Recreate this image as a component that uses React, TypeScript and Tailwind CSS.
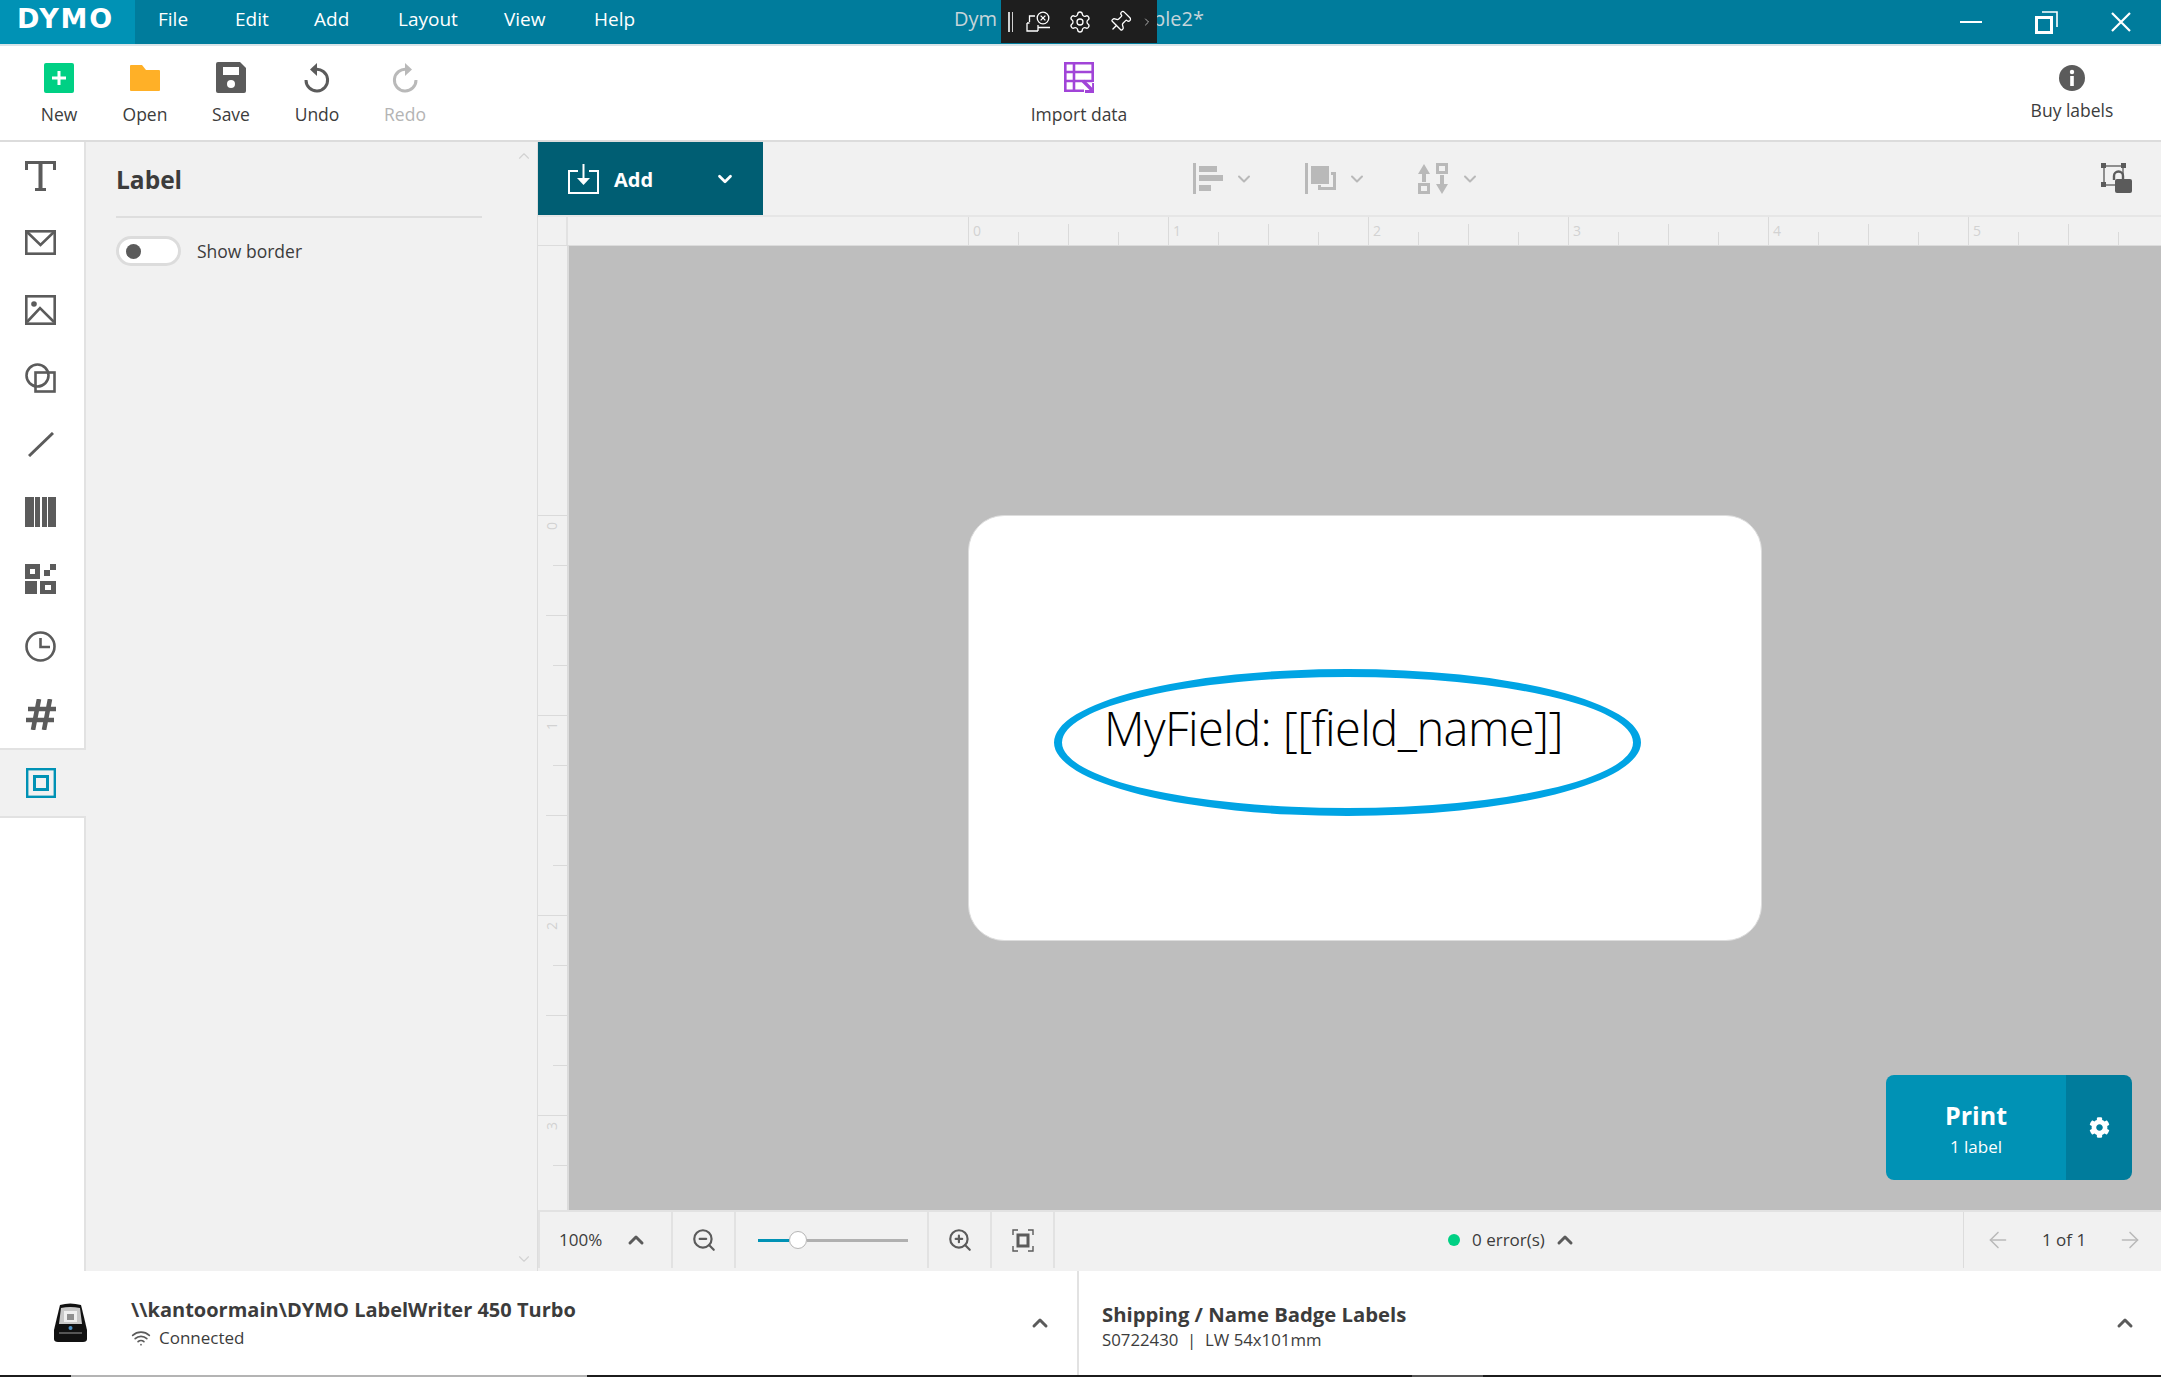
import { ChevronDown, ChevronUp, ZoomIn, ZoomOut, ArrowLeft, ArrowRight, Wifi, Settings, Pin, ChevronRight } from 'lucide-react';
import { FaCog } from 'react-icons/fa';

const FONT = "font-['Open_Sans','Noto_Sans',sans-serif]";

export default function App() {
  return (
    <div className={`flex flex-col w-[2161px] h-[1377px] overflow-hidden bg-white text-[#3c3c3c] ${FONT}`}>
      <TitleBar />
      <Toolbar />
      <div className="flex flex-1 min-h-0">
        <ToolRail />
        <LabelPanel />
        <Workspace />
      </div>
      <BottomBar />
      {/* Taskbar sliver at the very bottom */}
      <div className="flex h-[2px] shrink-0 bg-[#1c1c1c]">
        <div className="w-[71px]" />
        <div className="w-[516px] bg-[#b4b4b4]" />
        <div className="w-[825px]" />
        <div className="w-[71px] bg-[#555555]" />
      </div>
    </div>
  );
}

function TitleBar() {
  const menus = [
    { name: 'File', w: 'w-[77px]' },
    { name: 'Edit', w: 'w-[79px]' },
    { name: 'Add', w: 'w-[84px]' },
    { name: 'Layout', w: 'w-[106px]' },
    { name: 'View', w: 'w-[90px]' },
    { name: 'Help', w: 'w-[60px]' },
  ];
  return (
    <div className="relative flex h-[46px] shrink-0 items-stretch border-b-2 border-[#d9e4e8] bg-[#007c9c] text-white">
      <div className="flex w-[135px] items-center pl-[17px] pb-[7px] bg-[#0092b5]">
        <span className="font-['DejaVu_Sans',sans-serif] text-[27px] font-bold leading-none tracking-[1.8px]">DYMO</span>
      </div>
      <div className="flex items-center pl-[23px] pb-[6px] text-[19px]">
        {menus.map(m => (
          <span key={m.name} className={m.w}>{m.name}</span>
        ))}
      </div>
      <div className="ml-[300px] flex w-[250px] items-center justify-between pb-[6px] text-[20px] text-[#c6d5da]">
        <span>Dym</span>
        <span>ple2*</span>
      </div>

      {/* Remote desktop connection bar, sits over the title */}
      <div className="absolute left-[1001px] top-0 flex h-[43px] w-[156px] items-center bg-[#1e1e1e] text-white">
        <div className="ml-[7px] flex gap-[2px]">
          <div className="h-[20px] w-[1.5px] bg-[#d0d0d0]" />
          <div className="h-[20px] w-[1.5px] bg-[#d0d0d0]" />
        </div>
        <svg className="ml-[13px]" width="25" height="22" viewBox="0 0 25 22" fill="none" stroke="white" strokeWidth="1.3">
          <path d="M9 5H3.5V11M1 12H3.5M1 12V20H12M12 20V14" />
          <circle cx="17" cy="7" r="5.8" />
          <path d="M14.6 4.6l4.8 4.8M19.4 4.6l-4.8 4.8M12 16.5H24" />
        </svg>
        <Settings className="ml-[17px]" size={24} strokeWidth={1.3} />
        <Pin className="ml-[16px] rotate-45" size={24} strokeWidth={1.3} />
        <ChevronRight className="ml-[9px]" size={12} strokeWidth={1.3} />
      </div>

      {/* Window controls */}
      <div className="ml-auto flex items-center pr-[30px]">
        <div className="h-[2.5px] w-[22px] bg-white" />
        <svg className="ml-[53px]" width="23" height="23" viewBox="0 0 23 23" fill="none" stroke="white">
          <rect x="1.5" y="6.5" width="15" height="15" strokeWidth="3" />
          <path d="M7 1H22V16" strokeWidth="1.6" />
        </svg>
        <svg className="ml-[53px]" width="20" height="20" viewBox="0 0 20 20" stroke="white" strokeWidth="2.2">
          <path d="M1 1L19 19M19 1L1 19" />
        </svg>
      </div>
    </div>
  );
}

function ToolButton({ label, className, muted, children }: { label: string; className: string; muted?: boolean; children: React.ReactNode }) {
  return (
    <div className={`flex flex-col items-center ${className}`}>
      <div className="flex h-[31px] items-center justify-center">{children}</div>
      <span className={`mt-[10px] text-[17.5px] leading-[22px] whitespace-nowrap ${muted ? 'text-[#b4b4b4]' : ''}`}>{label}</span>
    </div>
  );
}

function Toolbar() {
  return (
    <div className="flex h-[96px] shrink-0 items-start border-b-2 border-[#dcdcdc] pt-[16px]">
      <ToolButton label="New" className="w-[86px] ml-[16px]">
        <svg width="30" height="30" viewBox="0 0 30 30">
          <rect width="30" height="30" rx="2" fill="#00d084" />
          <path d="M15 8V22M8 15H22" stroke="white" strokeWidth="3" />
        </svg>
      </ToolButton>
      <ToolButton label="Open" className="w-[86px]">
        <svg width="30" height="26" viewBox="0 0 30 26">
          <path d="M1 0H12L16 5H29A1 1 0 0 1 30 6V25A1 1 0 0 1 29 26H1A1 1 0 0 1 0 25V1A1 1 0 0 1 1 0Z" fill="#ffb027" />
        </svg>
      </ToolButton>
      <ToolButton label="Save" className="w-[86px]">
        <svg width="30" height="31" viewBox="0 0 30 31">
          <path d="M2 0H24L30 6V29A2 2 0 0 1 28 31H2A2 2 0 0 1 0 29V2A2 2 0 0 1 2 0Z" fill="#5b5b5b" />
          <rect x="7" y="5" width="16" height="8" fill="white" />
          <circle cx="15" cy="22" r="4" fill="white" />
        </svg>
      </ToolButton>
      <ToolButton label="Undo" className="w-[86px]">
        <UndoIcon color="#5b5b5b" />
      </ToolButton>
      <ToolButton label="Redo" className="w-[90px]" muted>
        <div className="-scale-x-100"><UndoIcon color="#b9b9b9" /></div>
      </ToolButton>
      <ToolButton label="Import data" className="ml-[529px] w-[200px]">
        <svg width="30" height="31" viewBox="0 0 30 31" fill="none" stroke="#a144d8" strokeWidth="2.6">
          <path d="M28.7 20V1.3H1.3V28.7H20M1.3 10H28.7M1.3 19H28.7M10 1.3V28.7" />
          <path d="M19 19L28 28" strokeWidth="3.4" />
          <path d="M21 29.6H29.6V21" strokeWidth="3" />
        </svg>
      </ToolButton>
      <div className="ml-auto mr-[39px] flex w-[100px] flex-col items-center">
        <svg className="mt-[3px]" width="26" height="26" viewBox="0 0 26 26">
          <circle cx="13" cy="13" r="13" fill="#5b5b5b" />
          <rect x="11.2" y="11" width="3.6" height="10" fill="white" />
          <circle cx="13" cy="7" r="2.2" fill="white" />
        </svg>
        <span className="mt-[8px] text-[17.5px] leading-[22px] whitespace-nowrap">Buy labels</span>
      </div>
    </div>
  );
}

function UndoIcon({ color }: { color: string }) {
  return (
    <svg width="26" height="30" viewBox="0 0 26 30" fill="none">
      <path d="M11 6.5A10.8 10.8 0 1 1 2 17" stroke={color} strokeWidth="3" />
      <path d="M6 6.5L13 0V13Z" fill={color} />
    </svg>
  );
}

function ToolRail() {
  const g = '#5b5b5b';
  const icons = [
    <svg width="31" height="30" viewBox="0 0 31 30" fill={g}>
      <path d="M0 0H31V9H28V3H17.5V27H21V30H10V27H13.5V3H3V9H0Z" />
    </svg>,
    <svg width="31" height="25" viewBox="0 0 31 25" fill="none" stroke={g} strokeWidth="2.6">
      <rect x="1.3" y="1.3" width="28.4" height="22.4" />
      <path d="M1.3 1.3L15.5 15L29.7 1.3" />
    </svg>,
    <svg width="31" height="30" viewBox="0 0 31 30" fill="none" stroke={g} strokeWidth="2.6">
      <rect x="1.3" y="1.3" width="28.4" height="27.4" />
      <circle cx="9" cy="9" r="2.8" fill={g} stroke="none" />
      <path d="M2 27L15 13L29 27" />
    </svg>,
    <svg width="31" height="30" viewBox="0 0 31 30" fill="none" stroke={g} strokeWidth="2.6">
      <circle cx="12.5" cy="12.5" r="11" />
      <rect x="10.5" y="9.5" width="19" height="19" />
    </svg>,
    <svg width="26" height="25" viewBox="0 0 26 25" stroke={g} strokeWidth="3">
      <path d="M1 24L25 1" />
    </svg>,
    <svg width="31" height="30" viewBox="0 0 31 30" fill={g}>
      <rect width="9" height="30" />
      <rect x="10" width="5" height="30" />
      <rect x="17" width="5" height="30" />
      <rect x="23" width="8" height="30" />
    </svg>,
    <svg width="31" height="30" viewBox="0 0 31 30">
      <rect width="15" height="15" fill={g} />
      <rect x="5" y="5" width="5" height="5" fill="white" />
      <rect y="17" width="12" height="13" fill={g} />
      <rect x="15" y="17" width="16" height="13" fill={g} />
      <rect x="20" y="21" width="6" height="5" fill="white" />
      <rect x="25" width="6" height="6" fill={g} />
      <rect x="19" y="6" width="6" height="6" fill={g} />
    </svg>,
    <svg width="31" height="31" viewBox="0 0 31 31" fill="none" stroke={g} strokeWidth="2.6">
      <circle cx="15.5" cy="15.5" r="14" />
      <path d="M15.5 7V16H25" />
    </svg>,
    <svg width="30" height="31" viewBox="0 0 30 31" fill="none" stroke={g} strokeWidth="4.6">
      <path d="M13 0L7 31M24 0L18 31M2 10H30M0 21H28" />
    </svg>,
  ];
  return (
    <div className="flex w-[86px] shrink-0 flex-col bg-[#f1f1f1]">
      <div className="border-r-2 border-b-2 border-[#e2e2e2] bg-white">
        {icons.map((icon, i) => (
          <div key={i} className="flex h-[67.3px] items-center justify-center pr-[3px]">{icon}</div>
        ))}
      </div>
      <div className="flex h-[66px] items-center justify-center pr-[4px]">
        <svg width="30" height="30" viewBox="0 0 30 30" fill="none" stroke="#0092b5">
          <rect x="1.2" y="1.2" width="27.6" height="27.6" strokeWidth="2.4" />
          <rect x="8.5" y="8.5" width="13" height="13" strokeWidth="3" />
        </svg>
      </div>
      <div className="flex-1 border-r-2 border-t-2 border-[#e2e2e2] bg-white" />
    </div>
  );
}

function LabelPanel() {
  return (
    <div className="relative w-[452px] shrink-0 border-r border-[#dddddd] bg-[#f1f1f1] pl-[30px]">
      <ChevronUp className="absolute right-[4px] top-[5px] text-[#d2d2d2]" size={18} strokeWidth={1.5} />
      <ChevronDown className="absolute right-[4px] bottom-[3px] text-[#d2d2d2]" size={18} strokeWidth={1.5} />
      <div className="flex h-[76px] w-[366px] items-center border-b-2 border-[#dedede] pt-[3px]">
        <span className="text-[24.5px] font-bold">Label</span>
      </div>
      <div className="mt-[18px] flex items-center">
        <div className="flex h-[30px] w-[65px] items-center rounded-full border-[3px] border-[#dcdcdc] bg-white pl-[7px]">
          <div className="h-[15px] w-[15px] rounded-full bg-[#5b5b5b]" />
        </div>
        <span className="ml-[16px] text-[17.5px]">Show border</span>
      </div>
    </div>
  );
}

function Workspace() {
  return (
    <div className="flex min-w-0 flex-1 flex-col bg-[#f1f1f1]">
      <ActionRow />
      <div className="flex h-[29px] shrink-0 border-b border-[#dcdcdc]">
        <div className="w-[30px] border-r-2 border-[#e2e2e2]" />
        <HorizontalRuler />
      </div>
      <div className="flex min-h-0 flex-1">
        <VerticalRuler />
        <Canvas />
      </div>
      <StatusBar />
    </div>
  );
}

function ActionRow() {
  const c = '#b9b9b9';
  return (
    <div className="flex h-[75px] shrink-0 items-center border-b-2 border-[#e6e6e6]">
      <div className="flex h-full w-[225px] items-center bg-[#005e73] pl-[30px] text-white">
        <svg width="31" height="30" viewBox="0 0 31 30" fill="none" stroke="white" strokeWidth="2">
          <path d="M10 7H1V29H30V7H21" />
          <path d="M15.5 0V17" />
          <path d="M9 14H22L15.5 21Z" fill="white" stroke="none" />
        </svg>
        <span className="ml-[15px] pt-[2px] text-[20px] font-bold">Add</span>
        <ChevronDown className="ml-[61px]" size={22} strokeWidth={3} />
      </div>

      <svg className="ml-[430px]" width="30" height="31" viewBox="0 0 30 31" fill={c}>
        <rect width="3" height="31" />
        <rect x="6" y="3" width="18" height="6" />
        <rect x="6" y="12" width="24" height="6" />
        <rect x="6" y="22" width="12" height="6" />
      </svg>
      <ChevronDown className="ml-[11px] text-[#b9b9b9]" size={20} strokeWidth={2.4} />

      <svg className="ml-[51px]" width="31" height="31" viewBox="0 0 31 31" fill={c}>
        <rect width="3" height="31" />
        <rect x="6" y="3" width="18" height="18" />
        <path d="M26 9H31V27H13V22H16V24H28V12H26Z" />
      </svg>
      <ChevronDown className="ml-[11px] text-[#b9b9b9]" size={20} strokeWidth={2.4} />

      <svg className="ml-[51px]" width="30" height="31" viewBox="0 0 30 31" fill={c}>
        <path d="M0 11L6 1L12 11H8V19H4V11Z" />
        <path fillRule="evenodd" d="M0 20H12V31H0ZM3 23V28H9V23Z" />
        <path fillRule="evenodd" d="M18 0H30V11H18ZM21 3V8H27V3Z" />
        <path d="M22 12H26V21H30L24 31L18 21H22Z" />
      </svg>
      <ChevronDown className="ml-[12px] text-[#b9b9b9]" size={20} strokeWidth={2.4} />

      <svg className="ml-auto mr-[28px]" width="32" height="31" viewBox="0 0 32 31" fill="none">
        <rect x="3" y="3" width="19" height="19" stroke="#5b5b5b" strokeWidth="1.3" />
        <rect x="0" y="0" width="5" height="5" fill="#5b5b5b" />
        <rect x="20" y="0" width="5" height="5" fill="#5b5b5b" />
        <rect x="0" y="19" width="5" height="5" fill="#5b5b5b" />
        <path d="M13 17V13A4.5 4.5 0 0 1 22 13V17" stroke="#5b5b5b" strokeWidth="2.4" fill="#f1f1f1" />
        <rect x="14" y="16" width="17" height="14" rx="2" fill="#5b5b5b" />
      </svg>
    </div>
  );
}

function HorizontalRuler() {
  const start = 400;
  const ticks = Array.from({ length: 24 }, (_, i) => i);
  return (
    <svg className="block" width="1594" height="28">
      {ticks.map(i => {
        const x = start + i * 50 + 0.5;
        const top = i % 4 === 0 ? 0 : i % 2 === 0 ? 7 : 15;
        return <line key={i} x1={x} x2={x} y1={top} y2={28} stroke="#dadada" />;
      })}
      {[0, 1, 2, 3, 4, 5].map(n => (
        <text key={n} x={start + n * 200 + 5} y={19} fontSize="14" fill="#d2d2d2">{n}</text>
      ))}
    </svg>
  );
}

function VerticalRuler() {
  const start = 269;
  const ticks = Array.from({ length: 14 }, (_, i) => i);
  return (
    <svg className="block shrink-0 border-r-2 border-[#dcdcdc]" width="31" height="964">
      {ticks.map(i => {
        const y = start + i * 50 + 0.5;
        const left = i % 4 === 0 ? 0 : i % 2 === 0 ? 8 : 15;
        return <line key={i} x1={left} x2={30} y1={y} y2={y} stroke="#dadada" />;
      })}
      {[0, 1, 2, 3].map(n => {
        const y = start + n * 200 + 15;
        return <text key={n} x={19} y={y} fontSize="14" fill="#d2d2d2" transform={`rotate(-90 19 ${y})`}>{n}</text>;
      })}
    </svg>
  );
}

function Canvas() {
  return (
    <div className="relative flex flex-1 items-center justify-center bg-[#bebebe]">
      <div className="h-[426px] w-[794px] rounded-[36px] border border-[#dddddd] bg-white pl-[85px] pt-[153px]">
        <div className="h-[147px] w-[587px] rounded-[50%] border-[8px] border-[#00a4e4] pl-[42px] pt-[19px]">
          <span className="text-[47px] font-light leading-[65px] tracking-[-0.6px] text-black whitespace-nowrap">MyField: [[field_name]]</span>
        </div>
      </div>

      {/* Print button floats over the canvas */}
      <div className="absolute bottom-[30px] right-[29px] flex h-[105px] w-[246px] overflow-hidden rounded-[8px] text-white">
        <div className="flex w-[180px] flex-col items-center justify-center bg-[#0092b5]">
          <span className="text-[25px] font-bold leading-[34px]">Print</span>
          <span className="mt-[4px] text-[17px] leading-[22px]">1 label</span>
        </div>
        <div className="flex flex-1 items-center justify-center bg-[#007c9c]">
          <FaCog size={21} />
        </div>
      </div>
    </div>
  );
}

function StatusBar() {
  const cell = 'flex h-full items-center justify-center border-r-2 border-[#e2e2e2]';
  return (
    <div className="flex h-[61px] shrink-0 items-stretch border-t-2 border-[#e2e2e2] pb-[3px]">
      <div className={`${cell} w-[135px] justify-start border-l-2 pl-[19px]`}>
        <span className="text-[17px]">100%</span>
        <ChevronUp className="ml-[22px] text-[#5b5b5b]" size={24} strokeWidth={3} />
      </div>
      <div className={`${cell} w-[63px]`}>
        <ZoomOut className="text-[#5b5b5b]" size={26} strokeWidth={2} />
      </div>
      <div className={`${cell} w-[193px] justify-start pl-[22px]`}>
        <div className="h-[3px] w-[31px] bg-[#0092b5]" />
        <div className="h-[18px] w-[18px] shrink-0 rounded-full border border-[#b5b5b5] bg-white" />
        <div className="h-[3px] w-[101px] bg-[#b0b0b0]" />
      </div>
      <div className={`${cell} w-[63px]`}>
        <ZoomIn className="text-[#5b5b5b]" size={26} strokeWidth={2} />
      </div>
      <div className={`${cell} w-[63px]`}>
        <svg width="22" height="23" viewBox="0 0 22 23" fill="none" stroke="#5b5b5b">
          <path d="M1 6V1H6M16 1H21V6M21 17V22H16M6 22H1V17" strokeWidth="1.4" />
          <rect x="6" y="6" width="10" height="11" strokeWidth="3" />
        </svg>
      </div>
      <div className="flex flex-1 items-center pl-[393px] border-r border-[#dcdcdc]">
        <div className="h-[12px] w-[12px] rounded-full bg-[#00d084]" />
        <span className="ml-[12px] text-[17px]">0 error(s)</span>
        <ChevronUp className="ml-[8px] text-[#5b5b5b]" size={24} strokeWidth={3} />
      </div>
      <div className="flex w-[197px] items-center justify-between pl-[21px] pr-[18px] text-[#b9b9b9]">
        <ArrowLeft size={26} strokeWidth={1.4} />
        <span className="text-[17px] text-[#3c3c3c]">1 of 1</span>
        <ArrowRight size={26} strokeWidth={1.4} />
      </div>
    </div>
  );
}

function BottomBar() {
  return (
    <div className="flex h-[104px] shrink-0 bg-white">
      <div className="flex w-[1079px] items-center border-r-2 border-[#e2e2e2]">
        <PrinterIcon />
        <div className="ml-[43px] flex flex-col">
          <span className="text-[20px] font-bold leading-[28px]">\\kantoormain\DYMO LabelWriter 450 Turbo</span>
          <div className="flex items-center pt-[1px]">
            <Wifi className="text-[#5b5b5b]" size={20} strokeWidth={2} />
            <span className="ml-[8px] text-[17px] leading-[26px]">Connected</span>
          </div>
        </div>
        <ChevronUp className="ml-auto mr-[25px] text-[#5b5b5b]" size={24} strokeWidth={3} />
      </div>
      <div className="flex flex-1 items-center pl-[23px]">
        <div className="flex flex-col pt-[6px]">
          <span className="text-[20.3px] font-bold leading-[28px]">Shipping / Name Badge Labels</span>
          <span className="text-[16.8px] leading-[24px] whitespace-pre">S0722430  |  LW 54x101mm</span>
        </div>
        <ChevronUp className="ml-auto mr-[24px] text-[#5b5b5b]" size={24} strokeWidth={3} />
      </div>
    </div>
  );
}

function PrinterIcon() {
  return (
    <svg className="ml-[53px]" width="35" height="40" viewBox="0 0 35 40">
      <path d="M7 2Q17 -1 28 2Q31 14 34 27V36Q34 39 30 39H5Q1 39 1 36V27Q4 14 7 2Z" fill="#111111" />
      <path d="M8 5Q17 3 27 5L29 21H6Z" fill="#c8c8c8" />
      <rect x="11" y="8" width="13" height="11" fill="#efefef" />
      <rect x="14" y="11" width="7" height="6" fill="#8f8f8f" />
      <circle cx="17.5" cy="25" r="2" fill="#4d90c4" />
      <rect x="6" y="29" width="23" height="2" fill="#555555" />
    </svg>
  );
}
